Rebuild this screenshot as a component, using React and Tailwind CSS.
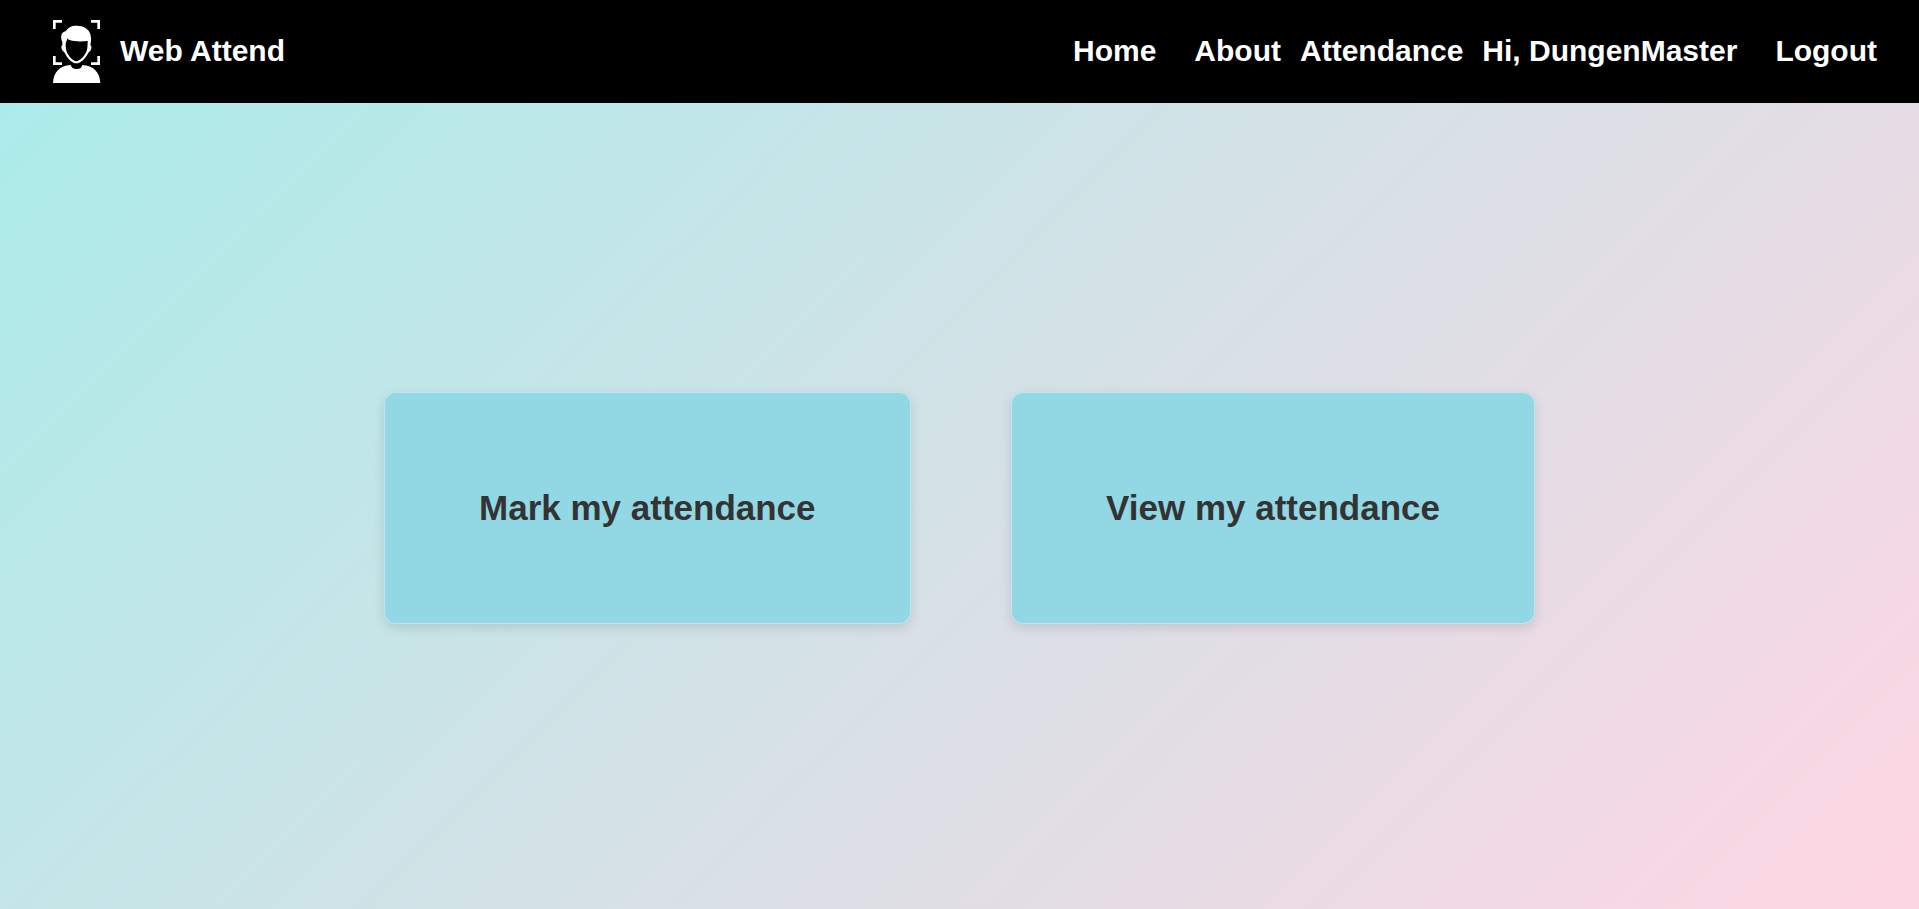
function Logo() {
  return (
    <svg viewBox="0 3 216 240" className="h-20 w-[72px] shrink-0" fill="#fff" aria-hidden="true">
      <path d="M39 30H66V38H47V57H39ZM153 30H180V57H172V38H153ZM39 138H47V157H66V165H39ZM172 138H180V165H153V157H172Z" />
      <path
        fillRule="evenodd"
        d="M67 96C61 82 62 67 77 64C84 52 95 46 110 47C135 47 152 60 153 83C154 92 152 99 151 105C156 108 155 117 151 122C149 125 147 125 145 128C137 145 122 160 109 160C96 160 82 145 74 128C72 125 69 125 67 121C63 115 63 108 67 105ZM77 103C77 113 78 122 82 130C89 143 101 154 109 154C117 154 130 143 137 130C141 122 143 113 143 93C125 95 103 95 91 91C87 90 84 88 83 85C81 92 77 96 77 103Z"
      />
      <path d="M39 219C40 188 59 166 92 165C95 174 101 177 110 177C119 177 124 174 127 165C160 166 180 188 181 219Z" />
    </svg>
  );
}

function Card({ href, children }) {
  return (
    <a
      href={href}
      className="grow rounded-xl border border-white/40 bg-[#92d8e4] px-6 py-[95px] text-center text-[35px] leading-10 font-bold text-[#333] shadow-[0_4px_12px_rgba(0,0,0,0.12)]"
    >
      {children}
    </a>
  );
}

export default function App() {
  return (
    <div className="flex min-h-screen flex-col bg-[linear-gradient(135deg,#a8edea_0%,#fed6e3_100%)] font-['Liberation_Sans',Arial,sans-serif]">
      <header className="flex items-center justify-between bg-black pt-[11px] pr-[42px] pb-3 pl-10 text-[30px] leading-9 font-bold text-white">
        <a href="#home" className="flex items-center gap-2">
          <Logo />
          <span>Web Attend</span>
        </a>
        <nav className="flex items-center gap-[38px]">
          <a href="#home">Home</a>
          <div className="flex items-center gap-[19px]">
            <a href="#about">About</a>
            <a href="#attendance">Attendance</a>
            <span>Hi, DungenMaster</span>
          </div>
          <a href="#logout">Logout</a>
        </nav>
      </header>
      <main className="flex grow items-center justify-center pt-1">
        <div className="flex w-3/5 gap-[100px]">
          <Card href="#mark">Mark my attendance</Card>
          <Card href="#view">View my attendance</Card>
        </div>
      </main>
    </div>
  );
}
